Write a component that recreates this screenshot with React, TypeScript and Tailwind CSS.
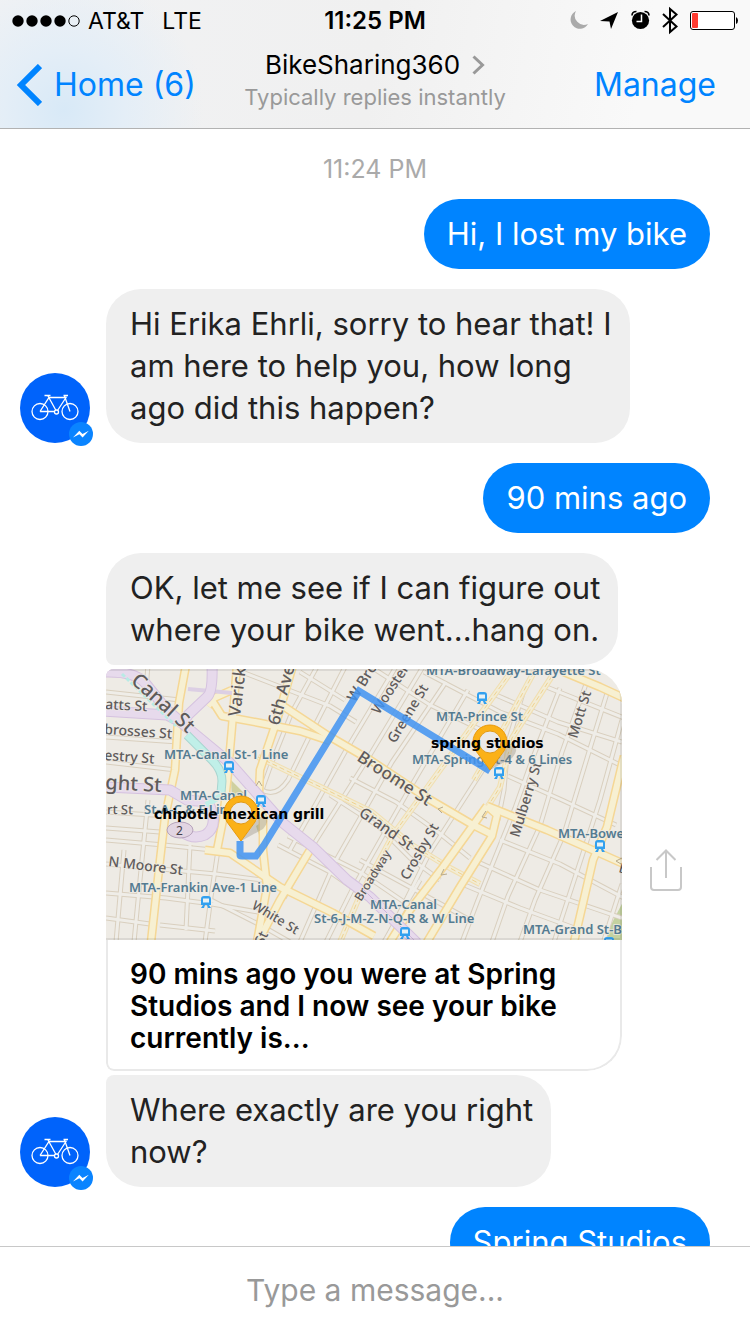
import type { ReactNode } from "react";

const yellowRoads = [
  "M186 665L179 703L175 770L165 817L160 860L151 942",
  "M237 665L232 727L228 773L223 820L217 850",
  "M293 665L277 720L260 770L259 793L263 820L263 850L267 887L257 942",
  "M208 694L222 716L260 723L300 731L330 741",
  "M232 690L214 698L208 706",
  "M280 704L327 735L370 760L427 798L473 825L493 835",
  "M205 850L230 853L280 887L333 913L374 936",
  "M310 850L280 900L258 942",
  "M487 806L443 867L410 910L390 942",
  "M487 806L497 815L492 836L460 887L427 942",
  "M487 806L547 830L597 852L624 864",
  "M624 756L607 827L593 860L574 942",
  "M564 672L600 687L624 698",
];

const laneRoads = [
  "M511 672L440 770L393 835L358 900L340 942",
  "M552 676L512 738L500 787L488 806",
  "M534 672L506 724L474 780",
  "M258 757L333 793L372 812L412 845L450 868L480 884",
];

const minorRoads = [
  "M106 692L180 700", "M106 737L178 742", "M106 762L176 770", "M106 812L168 816",
  "M106 840L164 845L212 850", "M106 864L216 874L262 880", "M106 893L166 898L212 904L258 912",
  "M106 918L150 924", "M160 925L215 931", "M148 665L146 690", "M148 800L140 880L134 942",
  "M124 850L116 942", "M218 850L211 897L205 942", "M190 845L186 930",
  "M211 900L262 926L290 942", "M278 845L330 872L370 900", "M288 836L360 872L410 906",
  "M106 828L160 832", "M242 672L330 706L356 722", "M300 672L345 700",
  "M318 665L292 712L272 762L262 790", "M346 665L310 735L288 780Q276 798 262 790",
  "M397 665L345 752L290 850", "M424 665L370 755L310 850L284 898",
  "M446 682L392 762L335 862L300 942", "M468 690L410 788L352 890L326 942",
  "M330 795L378 826L410 858L440 880", "M350 778L396 802L438 832L470 858",
  "M368 665L430 705L510 744", "M424 672L500 712L558 734L622 766",
  "M496 695L558 722L622 742", "M544 686L624 718", "M488 762L430 852L385 942",
  "M508 776L562 800L616 825", "M500 840L560 864L624 898", "M478 862L540 890L622 918",
  "M462 884L520 908L580 930", "M524 690L508 742L504 790L498 820",
  "M560 688L532 760L515 808L478 900L462 942", "M586 684L562 752L540 826L508 896L492 942",
  "M608 690L588 755L564 834L535 900L520 942", "M622 720L600 800L584 850L554 942",
  "M622 884L604 940", "M360 860L430 898L470 920", "M420 880L384 942",
];

const trains = [
  [229, 767], [261, 801], [206, 902], [482, 698], [499, 773], [600, 846], [405, 933], [609, 943],
];

type Label = [text: string, x: number, y: number, size: number, rotate: number];

const streetLabels: Label[] = [
  ["Canal St", 130, 682, 20, 42],
  ["atts St", 105, 709, 14, 3],
  ["brosses St", 104, 734, 14, 4],
  ["estry St", 104, 760, 14, 4],
  ["ght St", 105, 789, 20, 3],
  ["rt St", 107, 814, 13, 1],
  ["N Moore St", 108, 866, 14, 7],
  ["Varick", 240, 717, 17, -83],
  ["6th Ave", 279, 726, 17, -75],
  ["W Bro", 355, 703, 15, -58],
  ["Wooster", 379, 715, 14, -57],
  ["Greene St", 395, 744, 14, -59],
  ["Broome St", 356, 760, 17, 33],
  ["Grand St", 358, 815, 15, 35],
  ["Crosby St", 408, 881, 14, -60],
  ["Broadway", 361, 902, 12, -58],
  ["White St", 251, 908, 13, 31],
  ["Mulberry St", 519, 838, 14, -73],
  ["Mott St", 577, 739, 14, -73],
  ["St", 263, 946, 14, -65],
];

const stationLabels: Label[] = [
  ["MTA-Canal St-1 Line", 164, 759, 13, 0],
  ["MTA-Canal", 180, 800, 13, 0],
  ["St-A-C & E Line", 144, 814, 13, 0],
  ["MTA-Frankin Ave-1 Line", 129, 892, 13, 0],
  ["MTA-Broadway-Lafayette St", 426, 675, 13, 0],
  ["MTA-Prince St", 436, 721, 13, 0],
  ["MTA-Spring St-4 & 6 Lines", 412, 764, 13, 0],
  ["MTA-Bowery", 558, 838, 13, 0],
  ["MTA-Canal", 370, 909, 13, 0],
  ["St-6-J-M-Z-N-Q-R & W Line", 314, 923, 13, 0],
  ["MTA-Grand St-B", 523, 934, 13, 0],
];

function MapLabels({ labels, className }: { labels: Label[]; className: string }) {
  return (
    <g className={className} strokeWidth="2" strokeLinejoin="round" paintOrder="stroke">
      {labels.map(([text, x, y, size, rotate]) => (
        <text key={text + x} x={x} y={y} fontSize={size} transform={`rotate(${rotate} ${x} ${y})`}>
          {text}
        </text>
      ))}
    </g>
  );
}

function Pin({ x, y }: { x: number; y: number }) {
  return (
    <g transform={`translate(${x} ${y})`}>
      <path d="M0 0L22 -12Q32 -24 18 -24Z" fill="#8b8575" opacity=".35" />
      <path
        d="M0 0L-14 -19Q-17 -24 -17 -28A17 17 0 0 1 17 -28Q17 -24 14 -19Z"
        fill="#fbb117"
        stroke="#e8990c"
        strokeWidth="1"
      />
      <circle cy="-28" r="11" fill="#ebe9e7" stroke="#e39a14" strokeWidth="1" />
    </g>
  );
}

function RouteMap() {
  return (
    <svg viewBox="106 669 516 271" className="block w-full" role="img" aria-label="Route map">
      <rect x="106" y="669" width="516" height="271" fill="#eeebe5" />
      <path d="M624 900L602 942H624Z" fill="#c4d2a0" />
      <path d="M231 780L244 793L232 798Z M256 826L268 818L260 838Z" fill="#cfd0a0" />
      <g fill="none" strokeLinejoin="round">
        {minorRoads.map((d) => (
          <path key={d} d={d} stroke="#d9cfbe" strokeWidth="5" />
        ))}
        {minorRoads.map((d) => (
          <path key={d} d={d} stroke="#efede8" strokeWidth="3" />
        ))}
        {laneRoads.map((d) => (
          <path key={d} d={d} stroke="#f1dfb0" strokeWidth="6" />
        ))}
        {laneRoads.map((d) => (
          <path key={d} d={d} stroke="#f2ecd6" strokeWidth="4" />
        ))}
        {laneRoads.map((d) => (
          <path key={d} d={d} stroke="#efd28f" strokeWidth="1" strokeDasharray="5 3" />
        ))}
        {yellowRoads.map((d) => (
          <path key={d} d={d} stroke="#f5d795" strokeWidth="9" />
        ))}
        {yellowRoads.map((d) => (
          <path key={d} d={d} stroke="#f7f0d2" strokeWidth="6" />
        ))}
        <path d="M188 689L232 693" stroke="#dccfe4" strokeWidth="4" />
        <g stroke="#d5c2df" strokeWidth="11">
          <path d="M104 672Q136 671 146 684L167 710L190 730L230 763L283 823L313 847L347 880L370 897L417 943" />
          <path d="M212 665Q213 692 207 697L188 715L183 723" />
          <path d="M104 711L167 715L183 723" />
          <path d="M104 787L170 790L187 800L208 802Q220 826 205 835Q193 840 182 832" />
        </g>
        <g stroke="#e7daec" strokeWidth="9">
          <path d="M104 672Q136 671 146 684L167 710L190 730L230 763L283 823L313 847L347 880L370 897L417 943" />
          <path d="M212 665Q213 692 207 697L188 715L183 723" />
          <path d="M104 711L167 715L183 723" />
          <path d="M104 787L170 790L187 800L208 802Q220 826 205 835Q193 840 182 832" />
        </g>
        <path d="M362 888L417 943" stroke="#cdb6d8" strokeWidth="1" />
        <path d="M187 735L212 760Q222 770 222 781L221 793" stroke="#a9d5d0" strokeWidth="9" />
        <path d="M187 735L212 760Q222 770 222 781L221 793" stroke="#c0efe8" strokeWidth="7" />
        <path d="M221 796L206 805" stroke="#c0efe8" strokeWidth="6" />
        <path d="M122 674L176 726" stroke="#b8ebe5" strokeWidth="3" strokeDasharray="4 2" />
        <path d="M256 786L259 781L262 786 M486 811L482 817L487 818 M443 807L438 809L442 813 M444 869L441 875L447 874 M622 858L616 861L621 864" stroke="#b7a98c" />
      </g>
      <ellipse cx="180" cy="830" rx="13" ry="8" fill="#e2d5e2" stroke="#b7a4bc" />
      <text x="176" y="835" fontSize="12" className="fill-[#44404a] font-['Noto_Sans']">2</text>
      <MapLabels labels={streetLabels} className="fill-[#5f5b5b] stroke-[#eeebe5]/70 font-['Noto_Sans'] font-medium" />
      <MapLabels labels={stationLabels} className="fill-[#547b91] stroke-[#eeebe5]/80 font-['Noto_Sans'] font-semibold" />
      {trains.map(([x, y]) => (
        <g key={x} transform={`translate(${x} ${y})`}>
          <path d="M-2 -6H2Q5 -6 5 -3V3H-5V-3Q-5 -6 -2 -6Z M-5 6L-3 3H-1L-2 6Z M5 6L3 3H1L2 6Z" fill="#32a0ef" />
          <rect x="-3" y="-3.500" width="6" height="4" fill="#e8f1f5" />
        </g>
      ))}
      <path
        d="M240 841V855Q240 856 242 856H256L264 845L359 691L490 771"
        fill="none"
        stroke="#3f93f2"
        strokeOpacity=".85"
        strokeWidth="7"
      />
      <Pin x={241} y={841} />
      <Pin x={490} y={770} />
      <g className="fill-black font-['DejaVu_Sans'] font-bold" fontSize="14">
        <text x="154" y="819">chipotle mexican grill</text>
        <text x="431" y="748">spring studios</text>
      </g>
      <text x="618" y="872" fontSize="14" transform="rotate(15 618 872)" className="fill-[#555] font-['Noto_Sans']">B</text>
      <path d="M106 670H592Q621 670 621 699V939H106" fill="none" stroke="#000" strokeOpacity=".08" strokeWidth="2" />
    </svg>
  );
}

function Avatar() {
  return (
    <div className="relative size-[70px] shrink-0 rounded-full bg-[#0063fb]">
      <svg viewBox="0 0 70 70" className="size-full" fill="none" stroke="#fff" strokeWidth="1.300" role="img" aria-label="BikeSharing360">
        <circle cx="20" cy="38.500" r="8" />
        <circle cx="50" cy="38.500" r="8" />
        <circle cx="36.500" cy="39" r="2" />
        <path d="M20 38.500L29 24.500H46L37.500 37.500 M28 23L36 37.500 M20 38.500H34.500 M24.500 22.500H30.500 M43.500 22.500H48 M44.500 23L50 38.500" />
      </svg>
      <svg viewBox="0 0 24 24" className="absolute -right-[3px] -bottom-[3px] size-6" aria-hidden="true">
        <circle cx="12" cy="12" r="12" fill="#0a84ff" />
        <path d="M4 15.500L10.300 8.800L13.500 12L19.800 8.800L13.600 15.500L10.400 12.300Z" fill="#fff" />
      </svg>
    </div>
  );
}

function Sent({ children }: { children: ReactNode }) {
  return (
    <p className="mr-10 self-end rounded-[35px] bg-[#0084ff] px-[23px] py-[14px] text-[31px] leading-[42px] text-white">
      {children}
    </p>
  );
}

function Received({ children, shape, avatar = false }: { children: ReactNode; shape: string; avatar?: boolean }) {
  return (
    <div className="flex items-end gap-4 pl-5">
      {avatar ? <Avatar /> : <div className="w-[70px] shrink-0" />}
      <p className={`bg-[#efefef] py-[14px] pr-[18px] pl-6 text-[31px] leading-[42px] whitespace-pre-line text-[#222] ${shape}`}>
        {children}
      </p>
    </div>
  );
}

function StatusBar() {
  return (
    <div className="grid h-[42px] grid-cols-3 items-center px-3 text-[23px] leading-10">
      <div className="flex items-center gap-2">
        <svg viewBox="0 0 68 12" className="h-3 w-[68px]" role="img" aria-label="Signal">
          <circle cx="6" cy="6" r="5.700" />
          <circle cx="20" cy="6" r="5.700" />
          <circle cx="34" cy="6" r="5.700" />
          <circle cx="48" cy="6" r="5.700" />
          <circle cx="62" cy="6" r="5.200" fill="none" stroke="#000" />
        </svg>
        <span>AT&amp;T</span>
        <span className="ml-2.5">LTE</span>
      </div>
      <div className="text-center text-2xl font-semibold">11:25 PM</div>
      <svg viewBox="568 6 170 30" className="h-[30px] w-[170px] justify-self-end" role="img" aria-label="Status icons">
        <path d="M576 11A9.300 9.300 0 1 0 588 24A9.300 9.300 0 0 1 576 11Z" fill="#aaa" />
        <path d="M618 12L611 29L609.500 21.500L600 21Z" />
        <circle cx="640.500" cy="20.500" r="8.600" />
        <path d="M632 15.500Q632 11.500 636.500 11.500 M649 15.500Q649 11.500 644.500 11.500" fill="none" stroke="#000" strokeWidth="1.600" />
        <path d="M641.500 14.500V21.500H636.500" fill="none" stroke="#fff" strokeWidth="1.500" />
        <path d="M663 14L676.500 26.500L670 32V9L676.500 14.500L663 27" fill="none" stroke="#000" strokeWidth="2" />
        <rect x="690.500" y="11.500" width="44" height="18" rx="2.500" fill="#fff" stroke="#000" />
        <rect x="692" y="13" width="6" height="15" rx="1" fill="#ff3b30" />
        <path d="M736 17Q738 18 738 20.500T736 24Z" />
      </svg>
    </div>
  );
}

export default function App() {
  return (
    <div className="flex h-screen flex-col overflow-hidden bg-white font-['Inter','Liberation_Sans',sans-serif] text-black">
      <header className="shrink-0 border-b border-[#b2b2b2] bg-[radial-gradient(circle_at_64px_110px,#d8e9f7_0,#e4eef7_60px,transparent_140px),linear-gradient(100deg,#f1f2f4_0%,#f0f0f0_50%,#f9f9f9_85%)]">
        <StatusBar />
        <nav className="grid h-[86px] grid-cols-[1fr_auto_1fr] items-center">
          <a href="#home" className="flex items-center gap-3 pl-4 text-[32px] text-[#0084ff]">
            <svg viewBox="0 0 26 42" className="h-[42px] w-[26px]" fill="none" stroke="currentColor" strokeWidth="6" aria-hidden="true">
              <path d="M24 2L5 21L24 40" />
            </svg>
            Home (6)
          </a>
          <div className="flex flex-col items-center pb-2">
            <button className="flex items-center gap-3 text-[26px] leading-8">
              BikeSharing360
              <svg viewBox="0 0 13 20" className="h-5 w-[13px]" fill="none" stroke="#999" strokeWidth="3" aria-hidden="true">
                <path d="M1.500 1.500L10.500 10L1.500 18.500" />
              </svg>
            </button>
            <p className="text-[22px] leading-8 text-[#999]">Typically replies instantly</p>
          </div>
          <button className="justify-self-end pr-[34px] text-[32px] text-[#0084ff]">Manage</button>
        </nav>
      </header>

      <main className="flex min-h-0 flex-1 flex-col gap-5 overflow-hidden pt-6">
        <time className="-mb-1.5 text-center text-[25px] leading-8 text-[#aaa]">11:24 PM</time>
        <Sent>Hi, I lost my bike</Sent>
        <Received avatar shape="rounded-[35px]">
          {"Hi Erika Ehrli, sorry to hear that! I\nam here to help you, how long\nago did this happen?"}
        </Received>
        <Sent>90 mins ago</Sent>
        <div className="flex flex-col gap-1">
          <Received shape="rounded-[35px] rounded-bl-lg">
            {"OK, let me see if I can figure out\nwhere your bike went...hang on."}
          </Received>
          <div className="flex items-center gap-7 pl-[106px]">
            <article className="w-[516px] overflow-hidden rounded-lg rounded-r-[35px] bg-white">
              <RouteMap />
              <h2 className="rounded-br-[35px] rounded-bl-lg border-2 border-t-0 border-[#e9e9e9] px-[22px] pt-[18px] pb-[15px] text-[28px] leading-8 font-semibold whitespace-pre-line">
                {"90 mins ago you were at Spring\nStudios and I now see your bike\ncurrently is..."}
              </h2>
            </article>
            <button aria-label="Share">
              <svg viewBox="0 0 32 42" className="h-[42px] w-8" fill="none" stroke="#c8c8c8" strokeWidth="2" aria-hidden="true">
                <path d="M1 18V38Q1 41 4 41H28Q31 41 31 38V18 M16 29V1.500 M6.500 11L16 1.500L25.500 11" />
              </svg>
            </button>
          </div>
          <Received avatar shape="rounded-[35px] rounded-tl-lg">
            {"Where exactly are you right\nnow?"}
          </Received>
        </div>
        <Sent>Spring Studios</Sent>
      </main>

      <footer className="flex h-[88px] shrink-0 items-center border-t border-[#c8c8c8] bg-white">
        <input
          type="text"
          aria-label="Message"
          placeholder="Type a message..."
          className="w-full text-center text-[30px] outline-none placeholder:text-[#999]"
        />
      </footer>
    </div>
  );
}
